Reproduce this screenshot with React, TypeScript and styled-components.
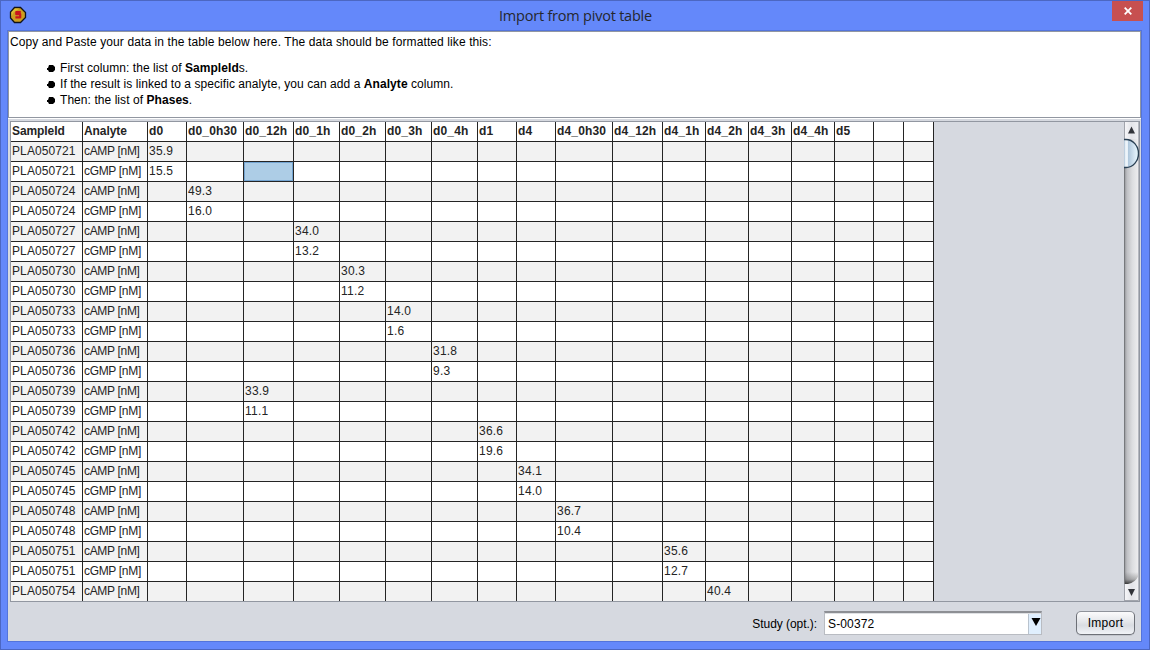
import React from 'react';
import styled, { createGlobalStyle } from 'styled-components';

const Global = createGlobalStyle`
  * { box-sizing: border-box; }
  body { margin: 0; overflow: hidden; }
`;

const Window = styled.div`
  width: 1150px;
  height: 650px;
  display: flex;
  flex-direction: column;
  background: #6488fa;
  border: 1px solid #4c67c2;
  padding: 0 7px 7px 6px;
  font: 12px/16px 'Liberation Sans', sans-serif;
  color: #000;
`;

const TitleBar = styled.header`
  height: 29px;
  display: grid;
  grid-template-columns: 31px 1fr 31px;
  margin: 0 -1px 0 1px;
`;

const AppIcon = styled.svg`
  width: 18px;
  height: 18px;
  margin: 5px 0 0 1px;
`;

const Title = styled.h1`
  margin: 0;
  text-align: center;
  padding-top: 4px;
  font: 14.5px/21px 'Open Sans', 'Noto Sans', sans-serif;
  letter-spacing: -0.22px;
  color: #25272e;
`;

const CloseButton = styled.button`
  width: 31px;
  height: 20px;
  padding: 0;
  border: 0;
  display: flex;
  align-items: center;
  justify-content: center;
  background: #c75050;
`;

const Content = styled.main`
  flex: 1;
  display: flex;
  flex-direction: column;
  background: #d6d9e0;
  border: 1px solid #5374db;
`;

const Intro = styled.section`
  width: 1133px;
  height: 87px;
  padding: 2px 0 0 1px;
  background: #fff;
  border: 1px solid #9297a1;
  box-shadow: 0 1px #fff;
`;

const Line = styled.p`
  margin: 0;
  letter-spacing: 0.1px;
`;

const Bullets = styled.ul`
  margin: 10px 0 0;
  padding: 0;
  list-style: none;
`;

const Bullet = styled.li`
  display: flex;
  align-items: center;
  height: 16px;
  padding-left: 37px;
  white-space: pre;
  letter-spacing: 0.06px;
`;

const Dot = styled.svg`
  width: 8px;
  height: 7px;
  margin: 1px 5px 0 0;
`;

const ScrollPane = styled.section`
  display: flex;
  width: 1130px;
  height: 481px;
  margin: 3px 0 0 2px;
  border: 1px solid #9297a1;
`;

const Viewport = styled.div`
  flex: 1;
  overflow: hidden;
`;

const Table = styled.table`
  width: 923px;
  table-layout: fixed;
  border-collapse: separate;
  border-spacing: 0;
`;

const Row = styled.tr<{ $shaded?: boolean }>`
  height: 20px;
  background: ${p => (p.$shaded ? '#f2f2f2' : '#fff')};
`;

const Cell = styled.td<{ $head?: boolean; $selected?: boolean; $tracking?: number }>`
  height: 20px;
  padding: 0 0 1px 1px;
  border-right: 1px solid #242424;
  border-bottom: 1px solid #242424;
  font-weight: ${p => (p.$head ? 'bold' : 'normal')};
  line-height: 18px;
  white-space: nowrap;
  letter-spacing: ${p => p.$tracking ?? 0}px;
  color: #242424;
  background: ${p => (p.$selected ? '#adcde6' : 'transparent')};
  box-shadow: ${p => (p.$selected ? 'inset 0 0 0 1px #73a4d1' : 'none')};
`;

const ScrollBar = styled.svg`
  width: 15px;
  height: 479px;
  display: block;
`;

const Footer = styled.footer`
  flex: 1;
  display: flex;
  align-items: flex-start;
  justify-content: flex-end;
  padding: 9px 6px 0 0;
`;

const Label = styled.label`
  padding: 5px 7px 0 0;
  letter-spacing: -0.05px;
`;

const Combo = styled.div`
  width: 218px;
  height: 24px;
  display: flex;
  border: 1px solid #b9bcc2;
  border-top: 2px solid #8d8f94;
  background: #fff;
  box-shadow: inset 0 1px #dfe1e4;
`;

const ComboText = styled.span`
  flex: 1;
  padding: 3px 0 0 3px;
  letter-spacing: 0.15px;
`;

const ComboArrow = styled.span`
  width: 13px;
  margin-top: 1px;
  background: #e0effe;
  border-left: 1px solid #b9c3ce;
`;

const ImportButton = styled.button`
  width: 59px;
  height: 24px;
  margin-left: 34px;
  padding: 1px 0 0;
  border: 1px solid #6d7077;
  border-top-color: #8f939b;
  border-radius: 5px;
  background: linear-gradient(#fbfbfc, #e4e6ea 45%, #d9dce2 60%, #f1f3f7);
  box-shadow: 0 1px #c2c5cc;
  font: 12px/21px 'Liberation Sans', sans-serif;
  letter-spacing: 0.25px;
  color: #000;
`;

const columns: [string, number][] = [
  ['SampleId', 72], ['Analyte', 65], ['d0', 39], ['d0_0h30', 57], ['d0_12h', 50],
  ['d0_1h', 46], ['d0_2h', 46], ['d0_3h', 46], ['d0_4h', 46], ['d1', 39],
  ['d4', 39], ['d4_0h30', 57], ['d4_12h', 50], ['d4_1h', 43], ['d4_2h', 43],
  ['d4_3h', 43], ['d4_4h', 43], ['d5', 39], ['', 30], ['', 30],
];

const samples: [string, string, string, string][] = [
  ['PLA050721', 'd0', '35.9', '15.5'],
  ['PLA050724', 'd0_0h30', '49.3', '16.0'],
  ['PLA050727', 'd0_1h', '34.0', '13.2'],
  ['PLA050730', 'd0_2h', '30.3', '11.2'],
  ['PLA050733', 'd0_3h', '14.0', '1.6'],
  ['PLA050736', 'd0_4h', '31.8', '9.3'],
  ['PLA050739', 'd0_12h', '33.9', '11.1'],
  ['PLA050742', 'd1', '36.6', '19.6'],
  ['PLA050745', 'd4', '34.1', '14.0'],
  ['PLA050748', 'd4_0h30', '36.7', '10.4'],
  ['PLA050751', 'd4_1h', '35.6', '12.7'],
  ['PLA050754', 'd4_2h', '40.4', ''],
];

const rows = samples
  .flatMap(([id, phase, camp, cgmp]) => [
    { id, phase, analyte: 'cAMP [nM]', value: camp },
    { id, phase, analyte: 'cGMP [nM]', value: cgmp },
  ])
  .slice(0, 23);

const BulletDot = () => (
  <Dot viewBox="0 0 8 7"><path d="M2 0h4l2 2v3L6 7H2L1 5H0V3h1z" fill="#000" /></Dot>
);

const VerticalScroll = () => (
  <ScrollBar viewBox="0 0 15 479">
    <defs>
      <linearGradient id="track">
        <stop offset="0" stopColor="#8c8d91" />
        <stop offset=".2" stopColor="#bfc0c4" />
        <stop offset=".55" stopColor="#dcdde0" />
        <stop offset="1" stopColor="#efeff1" />
      </linearGradient>
      <linearGradient id="button">
        <stop offset="0" stopColor="#f8f8fa" />
        <stop offset=".5" stopColor="#e3e4e9" />
        <stop offset="1" stopColor="#f0f1f4" />
      </linearGradient>
      <linearGradient id="thumb">
        <stop offset="0" stopColor="#a9bfd3" />
        <stop offset=".12" stopColor="#f0f6fb" />
        <stop offset=".24" stopColor="#e9f2f9" />
        <stop offset=".3" stopColor="#afc7dc" />
        <stop offset=".75" stopColor="#d9e9f5" />
        <stop offset="1" stopColor="#e7f9ff" />
      </linearGradient>
      <linearGradient id="shade" x2="0" y2="1">
        <stop offset="0" stopColor="#333" stopOpacity="0" />
        <stop offset=".6" stopColor="#333" stopOpacity=".3" />
        <stop offset="1" stopColor="#222" stopOpacity=".85" />
      </linearGradient>
    </defs>
    <path d="M0 0h15v479H0z" fill="url(#track)" />
    <path d="M0 0h15v17H0z" fill="url(#button)" />
    <path d="M0 450h15v12H0z" fill="url(#shade)" />
    <path d="M0 462h4q7-1 11-9v26H0z" fill="url(#button)" />
    <path d="M.5 0v17M.5 462v17M0 478.5h14" stroke="#a1a4ac" />
    <path d="M.5 17v445" stroke="#77797d" />
    <path d="M14.5 0v479" stroke="#b4b7bf" />
    <path d="M0 17.5h2A12.5 14 0 0 1 2 45.5H0z" fill="url(#thumb)" />
    <path d="M0 17.5h2A12.5 14 0 0 1 2 45.5H0" fill="none" stroke="#2a4054" strokeWidth="1.4" />
    <path d="M7.5 4.5l3.5 7H4z" fill="#32343a" />
    <path d="M7.5 474l-3.5-7h7z" fill="#32343a" />
  </ScrollBar>
);

export default function App() {
  return (
    <>
      <Global />
      <Window>
        <TitleBar>
          <AppIcon viewBox="0 0 18 18">
            <path d="M5.5 1.5h6l5 5v5l-5 5h-6l-4-4.500v-6z" fill="#cc9e20" stroke="#11131c" strokeWidth="1.3" />
            <path d="M6 2.5h4.5l-6 4-2 4V6z" fill="#e0bd35" />
            <path d="M11.800 6.200H7.300v2h3.900v3.200H6.400" fill="none" stroke="#c9141d" strokeWidth="2.200" strokeLinejoin="round" />
          </AppIcon>
          <Title>Import from pivot table</Title>
          <CloseButton aria-label="Close">
            <svg width="8" height="8" viewBox="0 0 8 8">
              <path d="M.7.7l6.6 6.6M7.3.7L.7 7.3" stroke="#fff" strokeWidth="1.8" />
            </svg>
          </CloseButton>
        </TitleBar>
        <Content>
          <Intro>
            <Line>Copy and Paste your data in the table below here. The data should be formatted like this:</Line>
            <Bullets>
              <Bullet><BulletDot />First column: the list of <b>SampleId</b>s.</Bullet>
              <Bullet><BulletDot />If the result is linked to a specific analyte, you can add a <b>Analyte</b> column.</Bullet>
              <Bullet><BulletDot />Then: the list of <b>Phases</b>.</Bullet>
            </Bullets>
          </Intro>
          <ScrollPane>
            <Viewport>
              <Table>
                <colgroup>
                  {columns.map(([, width], i) => <col key={i} width={width} />)}
                </colgroup>
                <tbody>
                  <Row>
                    {columns.map(([name], i) => (
                      <Cell key={i} $head $tracking={i < 2 ? -0.08 : 0.15}>{name}</Cell>
                    ))}
                  </Row>
                  {rows.map((row, r) => (
                    <Row key={r} $shaded={r % 2 === 0}>
                      {columns.map(([name], c) => (
                        <Cell
                          key={c}
                          $selected={r === 1 && name === 'd0_12h'}
                          $tracking={c === 0 ? 0.1 : c === 1 ? -0.32 : 0.22}
                        >
                          {c === 0 ? row.id : c === 1 ? row.analyte : name === row.phase ? row.value : ''}
                        </Cell>
                      ))}
                    </Row>
                  ))}
                </tbody>
              </Table>
            </Viewport>
            <VerticalScroll />
          </ScrollPane>
          <Footer>
            <Label>Study (opt.):</Label>
            <Combo>
              <ComboText>S-00372</ComboText>
              <ComboArrow>
                <svg width="12" height="19" viewBox="0 0 12 19"><path d="M2.500 4h9L7 12z" fill="#000" /></svg>
              </ComboArrow>
            </Combo>
            <ImportButton>Import</ImportButton>
          </Footer>
        </Content>
      </Window>
    </>
  );
}
